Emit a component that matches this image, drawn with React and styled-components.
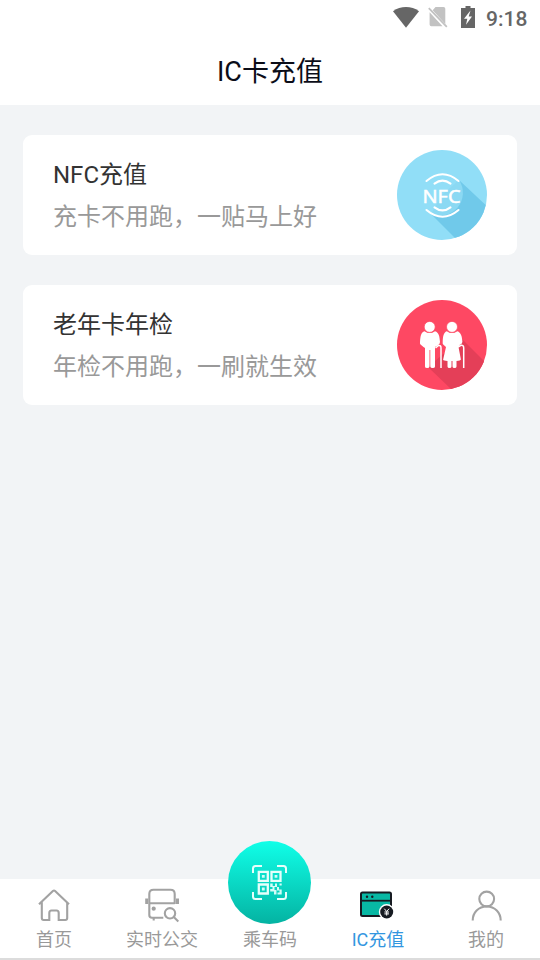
import React from 'react';
import styled, { createGlobalStyle } from 'styled-components';

const services = [
  { title: 'NFC充值', text: '充卡不用跑，一贴马上好', Icon: NfcIcon },
  { title: '老年卡年检', text: '年检不用跑，一刷就生效', Icon: ElderlyIcon },
];

const tabs = [
  { label: '首页', Icon: HomeIcon },
  { label: '实时公交', Icon: BusIcon },
  { label: '乘车码', Icon: QrIcon, raised: true },
  { label: 'IC充值', Icon: WalletIcon, active: true },
  { label: '我的', Icon: UserIcon },
];

const App = () => (
  <Screen>
    <GlobalStyle />
    <StatusBar>
      <WifiIcon />
      <NoSimIcon />
      <BatteryIcon />
      <Time>9:18</Time>
    </StatusBar>
    <Header>IC卡充值</Header>
    <Content>
      {services.map(({ title, text, Icon }) => (
        <Card key={title}>
          <CardBody>
            <CardTitle>{title}</CardTitle>
            <CardText>{text}</CardText>
          </CardBody>
          <Icon />
        </Card>
      ))}
    </Content>
    <TabBar>
      {tabs.map(({ label, Icon, active, raised }) => (
        <Tab key={label}>
          <TabIcon $raised={raised}>
            <Icon />
          </TabIcon>
          <TabLabel $active={active}>{label}</TabLabel>
        </Tab>
      ))}
    </TabBar>
  </Screen>
);

/* icons */
function WifiIcon() {
  return (
    <Svg width="26" height="21" viewBox="0 0 26 21">
      <path d="M0 4.2C7.5-1.4 18.5-1.4 26 4.2L13 20.7z" fill="#666" />
    </Svg>
  );
}

function NoSimIcon() {
  return (
    <Svg width="20" height="22" viewBox="0 0 20 22">
      <path
        d="M7.5 1H15.5Q17.3 1 17.3 2.8V18L4.7 4.2zM1.6 6.2L14.5 20.2H3.3Q1.6 20.2 1.6 18.5z"
        fill="#c2c2c2"
      />
      <path d="M.8 2.2L18.8 20.8" stroke="#c2c2c2" strokeWidth="1.8" />
    </Svg>
  );
}

function BatteryIcon() {
  return (
    <Svg width="14" height="22" viewBox="0 0 14 22">
      <path d="M4.500 0H9.500V2H14V22H0V2H4.500z" fill="#666" />
      <path d="M9.500 4.500L3 12.800H6.300L5 18.800L11 10.400H7.700z" fill="#fff" />
    </Svg>
  );
}

function NfcIcon() {
  return (
    <Svg width="90" height="90" viewBox="0 0 90 90">
      <clipPath id="nfc-disc">
        <circle cx="45" cy="45" r="45" />
      </clipPath>
      <circle cx="45" cy="45" r="45" fill="#91def7" />
      <g clipPath="url(#nfc-disc)">
        <path d="M62 30L92 58V90H60L34 64z" fill="#70c9ea" />
        <path d="M62 30A23 23 0 0 1 34 64L45 45z" fill="#8bd9f3" />
      </g>
      <g fill="none" stroke="#fff" strokeWidth="2.100" strokeLinecap="round">
        <path d="M29.500 31Q45.500 17.500 61.500 31M37.500 33.700Q45.500 27.500 53.500 33.700" />
        <path d="M29.500 60Q45.500 73.500 61.500 60M37.500 57.300Q45.500 63.500 53.500 57.300" />
      </g>
      <NfcText x="25.500" y="53" textLength="38" lengthAdjust="spacingAndGlyphs">
        NFC
      </NfcText>
    </Svg>
  );
}

function ElderlyIcon() {
  return (
    <Svg width="90" height="90" viewBox="0 0 90 90">
      <clipPath id="elderly-disc">
        <circle cx="45" cy="45" r="45" />
      </clipPath>
      <circle cx="45" cy="45" r="45" fill="#fe4863" />
      <path
        d="M66 40L92 66V90H55L31 67L45 55z"
        fill="#e43f58"
        clipPath="url(#elderly-disc)"
      />
      <g fill="#fff">
        <path d="M27.500 31.200Q32.700 35 38 31.200C42 32.500 42.500 36 43 42Q43 44 41 45.300L38 47V66.500Q38 68 35.700 68T33.300 66.500V50H32.500V66.500Q32.500 68 30.200 68T28 66.500V48L26.500 47L23.500 44.500Q22.700 43.500 23 42C23.500 35.500 24 32.500 27.500 31.200z" />
        <path d="M49.800 31.200Q55 35 60.300 31.200C64 32.500 65 36 65.400 42Q65.300 44 62.500 45L61.500 47L63.900 59.500Q63.500 60.700 59.500 61V66.500Q59.500 68 57.500 68T55.500 66.500V61H54.500V66.500Q54.500 68 52.500 68T50.500 66.500V61Q46.500 60.700 46.100 59.700L49 47L46.200 44.500Q45.400 43.500 45.700 42C46 36 46.500 32.500 49.800 31.200z" />
      </g>
      <g fill="#fff" stroke="#fe4863" strokeWidth=".7">
        <circle cx="32.700" cy="26.900" r="5.500" />
        <circle cx="55" cy="26.900" r="5.500" />
      </g>
      <g fill="none" stroke="#fff" strokeWidth="1.500">
        <path d="M38.500 48L41.500 45.500Q44 45 44 48V68M61 47L64 45.300Q66.700 45 66.700 48V68" />
      </g>
    </Svg>
  );
}

function HomeIcon() {
  return (
    <LineSvg width="36" height="36" viewBox="0 0 36 36">
      <path d="M3 17.200L16.900 4Q18 3 19.100 4L33 17.200M5.800 15V31Q5.800 33 7.700 33H13.300V26Q13.300 23.500 15.500 23.500H20.500Q22.700 23.500 22.700 26V33H29.300Q31.200 33 31.200 31V15" />
    </LineSvg>
  );
}

function BusIcon() {
  return (
    <LineSvg width="36" height="36" viewBox="0 0 36 36">
      <path d="M19.300 30.700H8Q5.300 30.700 5.300 28V7Q5.300 2.800 9.500 2.800H26.500Q30.700 2.800 30.700 7V17M5.300 16.200H30.700M9.700 31V33.500" />
      <path d="M2.700 11.500V17M33.500 11.500V17" strokeWidth="3" />
      <circle cx="9.700" cy="21.700" r="2.100" fill="#a0a0a0" stroke="none" />
      <circle cx="26" cy="26.300" r="5.200" />
      <path d="M29.800 30.100L34.300 34.400" />
    </LineSvg>
  );
}

function QrIcon() {
  return (
    <Svg width="83" height="83" viewBox="0 0 83 83">
      <defs>
        <linearGradient id="qr-fill" x1="0" y1="0" x2="0" y2="1">
          <stop offset="0" stopColor="#10ffe8" />
          <stop offset="1" stopColor="#04b3a2" />
        </linearGradient>
      </defs>
      <circle cx="41.500" cy="41.500" r="41.500" fill="url(#qr-fill)" />
      <g fill="none" stroke="#e6fffb" strokeWidth="2">
        <path d="M25 32V27.500Q25 25 27.500 25H34M49 25H55.500Q58 25 58 27.500V32M58 51V55.500Q58 58 55.500 58H49M34 58H27.500Q25 58 25 55.500V51" />
        <path
          d="M30.800 30.800H39.800V39.800H30.800zM43.500 30.800H52.500V39.800H43.500zM30.800 43.500H39.800V52.500H30.800z"
          strokeWidth="2.300"
        />
      </g>
      <g fill="#d5fcf7">
        <path d="M33.900 33.900H36.700V36.700H33.900zM46.600 33.900H49.400V36.700H46.600zM33.900 46.600H36.700V49.400H33.900z" />
        <path d="M42.200 42.500H44.700V45H47V42.500H49V46H46.500V49H48.500V53.500H46V50.500H42.200V48H44.500V46H42.200zM51.500 42.500H53.700V44.500H51.500zM49 46H51V48.500H53.700V53.500H49.500V51.500H51.500V49.500H49z" />
      </g>
    </Svg>
  );
}

function WalletIcon() {
  return (
    <Svg width="36" height="36" viewBox="0 0 36 36">
      <rect x="1" y="5.500" width="30" height="23.600" rx="1.500" fill="#08b8a4" stroke="#171b22" strokeWidth="2" />
      <path d="M1 13.700H31" stroke="#171b22" strokeWidth="1.800" />
      <circle cx="7" cy="9.700" r="1.200" fill="#171b22" />
      <circle cx="12.300" cy="9.700" r="1.200" fill="#171b22" />
      <circle cx="26.700" cy="25" r="7.900" fill="#fff" />
      <circle cx="26.700" cy="25" r="6.500" fill="#171b22" />
      <path d="M24.300 21.700L26.700 24.500L29.100 21.700M26.700 24.500V28.600M24.400 25H29M24.400 26.900H29" fill="none" stroke="#fff" strokeWidth="1" />
    </Svg>
  );
}

function UserIcon() {
  return (
    <LineSvg width="36" height="36" viewBox="0 0 36 36">
      <circle cx="18.700" cy="12" r="7.400" />
      <path d="M4.700 33.500C4.700 25.500 10.500 19.500 18.700 19.500S32.700 25.500 32.700 33.500" />
    </LineSvg>
  );
}

/* styled-components */
const GlobalStyle = createGlobalStyle`
  body {
    margin: 0;
    font-family: Roboto, 'Noto Sans CJK SC', sans-serif;
  }
`;

const Screen = styled.div`
  display: flex;
  flex-direction: column;
  box-sizing: border-box;
  width: 540px;
  height: 960px;
  overflow: hidden;
  background: #f2f4f6;
`;

const Svg = styled.svg`
  display: block;
  flex-shrink: 0;
`;

const LineSvg = styled(Svg)`
  fill: none;
  stroke: #a2a2a2;
  stroke-width: 2.1;
`;

const NfcText = styled.text`
  font-family: 'Noto Sans', sans-serif;
  font-size: 18.5px;
  fill: #fff;
  stroke: #fff;
  stroke-width: 0.5;
`;

const StatusBar = styled.div`
  display: flex;
  align-items: center;
  justify-content: flex-end;
  box-sizing: border-box;
  height: 36px;
  padding: 0 12px 2px 0;
  background: #fff;

  ${Svg} + ${Svg} {
    margin-left: 9px;
  }

  ${Svg} + ${Svg} + ${Svg} {
    margin-left: 13px;
  }
`;

const Time = styled.span`
  width: 42px;
  margin-left: 11px;
  padding-top: 3px;
  color: #666;
  font-size: 21px;
  font-weight: 500;
  line-height: 26px;
`;

const Header = styled.div`
  box-sizing: border-box;
  height: 69px;
  padding-top: 2px;
  background: #fff;
  color: #0b0d18;
  font-size: 27px;
  line-height: 69px;
  text-align: center;
`;

const Content = styled.div`
  display: flex;
  flex: 1;
  flex-direction: column;
  gap: 30px;
  padding: 30px 23px;
`;

const Card = styled.div`
  display: flex;
  align-items: center;
  justify-content: space-between;
  box-sizing: border-box;
  height: 120px;
  padding: 0 30px;
  border-radius: 9px;
  background: #fff;
`;

const CardBody = styled.div`
  padding-top: 2px;
  font-size: 24px;
  line-height: 42px;
`;

const CardTitle = styled.div`
  color: #333;
`;

const CardText = styled.div`
  color: #999;
`;

const TabBar = styled.div`
  display: flex;
  height: 79px;
  border-bottom: 2px solid #dcdcdc;
  background: #fff;
`;

const Tab = styled.div`
  display: flex;
  flex: 1;
  flex-direction: column;
  align-items: center;
  justify-content: flex-end;
`;

const TabIcon = styled.div`
  padding: ${props => (props.$raised ? '0 1px 1px 0' : '0 0 2px')};
`;

const TabLabel = styled.div`
  flex-shrink: 0;
  height: 33px;
  color: ${props => (props.$active ? '#3296e0' : '#999')};
  font-size: 18px;
  line-height: 30px;
`;

export default App;
